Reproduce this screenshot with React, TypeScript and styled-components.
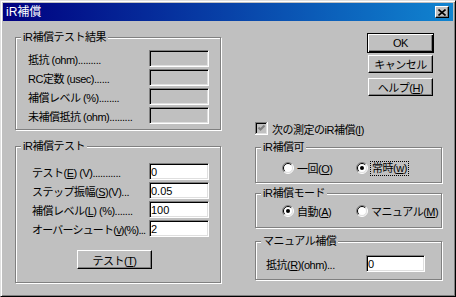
import React from "react"
import styled, { createGlobalStyle, css } from "styled-components"

const GlobalStyle = createGlobalStyle`
  html, body {
    margin: 0;
    padding: 0;
    background: #c0c0c0;
  }
  body {
    font-family: "Liberation Sans", "Noto Sans CJK JP", sans-serif;
    font-size: 11px;
    font-weight: 400;
    letter-spacing: -0.5px;
    color: #000;
  }
`

const Radio = ({ checked }: { checked?: boolean }) => (
  <svg width="12" height="12" viewBox="0 0 12 12">
    <circle cx="6" cy="6" r="5" fill="#fff" />
    <path d="M2.1 9.9 A5.5 5.5 0 0 1 9.9 2.1" stroke="#808080" fill="none" />
    <path d="M9.9 2.1 A5.5 5.5 0 0 1 2.1 9.9" stroke="#fff" fill="none" />
    <path d="M2.8 9.2 A4.5 4.5 0 0 1 9.2 2.8" stroke="#000" fill="none" />
    <path d="M9.2 2.8 A4.5 4.5 0 0 1 2.8 9.2" stroke="#dfdfdf" fill="none" />
    {checked && <circle cx="6" cy="6" r="2" fill="#000" />}
  </svg>
)

const CheckBox = () => (
  <svg width="13" height="13" viewBox="0 0 13 13">
    <rect x="0" y="0" width="13" height="13" fill="#fff" />
    <rect x="0" y="0" width="12" height="12" fill="#808080" />
    <rect x="1" y="1" width="11" height="11" fill="#dfdfdf" />
    <rect x="1" y="1" width="10" height="10" fill="#000" />
    <rect x="2" y="2" width="9" height="9" fill="#c0c0c0" />
    <path d="M3.5 5.5 L5.5 7.5 L9.5 3.5" stroke="#808080" strokeWidth="2.2" fill="none" />
  </svg>
)

const App = () => {
  return (
    <>
      <GlobalStyle />
      <Window>
        <TitleBar>
          <Caption>iR補償</Caption>
          <CloseButton aria-label="close">
            <svg width="8" height="7" viewBox="0 0 8 7">
              <path d="M0.5 0.5 L7.5 6.5 M7.5 0.5 L0.5 6.5" stroke="#000" strokeWidth="1.6" />
            </svg>
          </CloseButton>
        </TitleBar>

        <Body>
          {/* left column */}
          <LeftColumn>
            <Group>
              <Legend>iR補償テスト結果</Legend>
              <GroupBody $pad="6px 11px 5px 12px">
                <FieldRow>
                  <Label>抵抗 (ohm).........</Label>
                  <Field $readOnly readOnly defaultValue="" />
                </FieldRow>
                <FieldRow>
                  <Label>RC定数 (usec)......</Label>
                  <Field $readOnly readOnly defaultValue="" />
                </FieldRow>
                <FieldRow>
                  <Label>補償レベル (%)........</Label>
                  <Field $readOnly readOnly defaultValue="" />
                </FieldRow>
                <FieldRow>
                  <Label>未補償抵抗 (ohm).........</Label>
                  <Field $readOnly readOnly defaultValue="" />
                </FieldRow>
              </GroupBody>
            </Group>

            <Group $gap={10}>
              <Legend>iR補償テスト</Legend>
              <GroupBody $pad="10px 11px 13px 16px">
                <FieldRow>
                  <Label>
                    テスト(<U>E</U>) (V)...........
                  </Label>
                  <Field defaultValue="0" />
                </FieldRow>
                <FieldRow>
                  <Label>
                    ステップ振幅(<U>S</U>)(V)...
                  </Label>
                  <Field defaultValue="0.05" />
                </FieldRow>
                <FieldRow>
                  <Label>
                    補償レベル(<U>L</U>) (%).......
                  </Label>
                  <Field defaultValue="100" />
                </FieldRow>
                <FieldRow>
                  <Label $tight>
                    オーバーシュート(<U>v</U>)(%)...
                  </Label>
                  <Field defaultValue="2" />
                </FieldRow>
                <TestButton>
                  テスト(<U>T</U>)
                </TestButton>
              </GroupBody>
            </Group>
          </LeftColumn>

          {/* right column */}
          <RightColumn>
            <ButtonStack>
              <Button $default $w={67}>
                OK
              </Button>
              <Button $w={65} $mt={2}>
                キャンセル
              </Button>
              <Button $w={65} $mt={5}>
                ヘルプ(<U>H</U>)
              </Button>
            </ButtonStack>

            <CheckRow>
              <CheckBox />
              <span>
                次の測定のiR補償(<U>I</U>)
              </span>
            </CheckRow>

            <Group $gap={6}>
              <Legend>iR補償可</Legend>
              <GroupBody $pad="7px 0 7px 26px">
                <RadioRow>
                  <RadioItem>
                    <Radio />
                    <span>
                      一回(<U>O</U>)
                    </span>
                  </RadioItem>
                  <RadioItem>
                    <Radio checked />
                    <Focused>
                      常時(<U>w</U>)
                    </Focused>
                  </RadioItem>
                </RadioRow>
              </GroupBody>
            </Group>

            <Group $gap={4}>
              <Legend>iR補償モード</Legend>
              <GroupBody $pad="4px 0 9px 26px">
                <RadioRow>
                  <RadioItem>
                    <Radio checked />
                    <span>
                      自動(<U>A</U>)
                    </span>
                  </RadioItem>
                  <RadioItem>
                    <Radio />
                    <span>
                      マニュアル(<U>M</U>)
                    </span>
                  </RadioItem>
                </RadioRow>
              </GroupBody>
            </Group>

            <Group $gap={7}>
              <Legend>マニュアル補償</Legend>
              <GroupBody $pad="7px 0 7px 10px">
                <ManualRow>
                  <Label>
                    抵抗(<U>R</U>)(ohm)...
                  </Label>
                  <Field defaultValue="0" />
                </ManualRow>
              </GroupBody>
            </Group>
          </RightColumn>
        </Body>
      </Window>
    </>
  )
}

export default App

const Window = styled.div`
  width: 456px;
  height: 297px;
  box-sizing: border-box;
  background: #c0c0c0;
  border: 1px solid;
  border-color: #dfdfdf #000 #000 #dfdfdf;
  box-shadow: inset 1px 1px #fff, inset -1px -1px #808080;
  padding: 2px;
  display: flex;
  flex-direction: column;
  overflow: hidden;
`

const TitleBar = styled.div`
  height: 18px;
  flex: none;
  display: flex;
  align-items: center;
  justify-content: space-between;
  padding: 0 4px 0 3px;
  background: linear-gradient(90deg, #000080 0%, #1084d0 100%);
`

const Caption = styled.span`
  color: #fff;
  font-size: 12px;
  line-height: 18px;
  letter-spacing: 0;
`

const CloseButton = styled.div`
  width: 14px;
  height: 12px;
  box-sizing: border-box;
  background: #c0c0c0;
  border: 1px solid;
  border-color: #fff #000 #000 #fff;
  box-shadow: inset -1px -1px #808080;
  display: flex;
  align-items: center;
  justify-content: center;
`

const Body = styled.div`
  display: flex;
  padding: 10px 0 0 12px;
`

const LeftColumn = styled.div`
  width: 206px;
  display: flex;
  flex-direction: column;
`

const RightColumn = styled.div`
  width: 187px;
  margin-left: 34px;
  display: flex;
  flex-direction: column;
`

const Group = styled.fieldset<{ $gap?: number }>`
  margin: ${({ $gap }) => $gap || 0}px 0 0 0;
  padding: 0;
  border: 1px solid #808080;
  box-shadow: inset 1px 1px #fff, 1px 1px #fff;
  min-width: 0;
`

const Legend = styled.legend`
  margin-left: 5px;
  padding: 0 2px;
  line-height: 13px;
  background: #c0c0c0;
`

const GroupBody = styled.div<{ $pad: string }>`
  padding: ${({ $pad }) => $pad};
  display: flex;
  flex-direction: column;
  gap: 2px;
`

const FieldRow = styled.div`
  display: grid;
  grid-template-columns: 1fr 60px;
  align-items: center;
  height: 17px;
  white-space: nowrap;
`

const Label = styled.span<{ $tight?: boolean }>`
  overflow: hidden;
  letter-spacing: ${({ $tight }) => ($tight ? "-0.8px" : "-0.5px")};
`

const Field = styled.input<{ $readOnly?: boolean }>`
  width: 100%;
  height: 17px;
  box-sizing: border-box;
  margin: 0;
  padding: 0 1px;
  border: 1px solid;
  border-color: #808080 #fff #fff #808080;
  box-shadow: inset 1px 1px #000, inset -1px -1px #dfdfdf;
  background: ${({ $readOnly }) => ($readOnly ? "#c0c0c0" : "#fff")};
  font-family: inherit;
  font-size: 11px;
  letter-spacing: 0;
  color: #000;
  outline: none;
`

const U = styled.span`
  text-decoration: underline;
`

type ButtonProps = {
  $default?: boolean
  $w: number
  $mt?: number
}

const Button = styled.button<ButtonProps>`
  width: ${({ $w }) => $w}px;
  height: 18px;
  margin: ${({ $mt }) => $mt || 0}px 0 0 0;
  padding: 0;
  box-sizing: border-box;
  background: #c0c0c0;
  font-family: inherit;
  font-size: 11px;
  letter-spacing: inherit;
  color: #000;
  border: 1px solid;
  border-color: #fff #000 #000 #fff;
  box-shadow: inset -1px -1px #808080;
  ${({ $default }) =>
    $default &&
    css`
      height: 20px;
      border-color: #000;
      box-shadow: inset 1px 1px #fff, inset -1px -1px #000, inset -2px -2px #808080;
    `}
`

const ButtonStack = styled.div`
  align-self: flex-end;
  margin: 2px 8px 0 0;
  display: flex;
  flex-direction: column;
  align-items: center;
`

const TestButton = styled(Button).attrs({ $w: 75 })`
  height: 19px;
  margin: 11px 0 0 45px;
  align-self: flex-start;
`

const CheckRow = styled.div`
  margin-top: 26px;
  height: 13px;
  display: flex;
  align-items: center;
  gap: 4px;
  white-space: nowrap;

  svg {
    flex: none;
  }
`

const RadioRow = styled.div`
  display: flex;
  height: 14px;
  align-items: center;
`

const RadioItem = styled.div`
  width: 74px;
  display: flex;
  align-items: center;
  gap: 3px;
  white-space: nowrap;

  svg {
    flex: none;
  }
`

const Focused = styled.span`
  outline: 1px dotted #000;
  outline-offset: 0;
  padding: 0 1px;
  line-height: 13px;
`

const ManualRow = styled.div`
  display: grid;
  grid-template-columns: 100px 59px;
  align-items: center;
  height: 17px;
  white-space: nowrap;
`
